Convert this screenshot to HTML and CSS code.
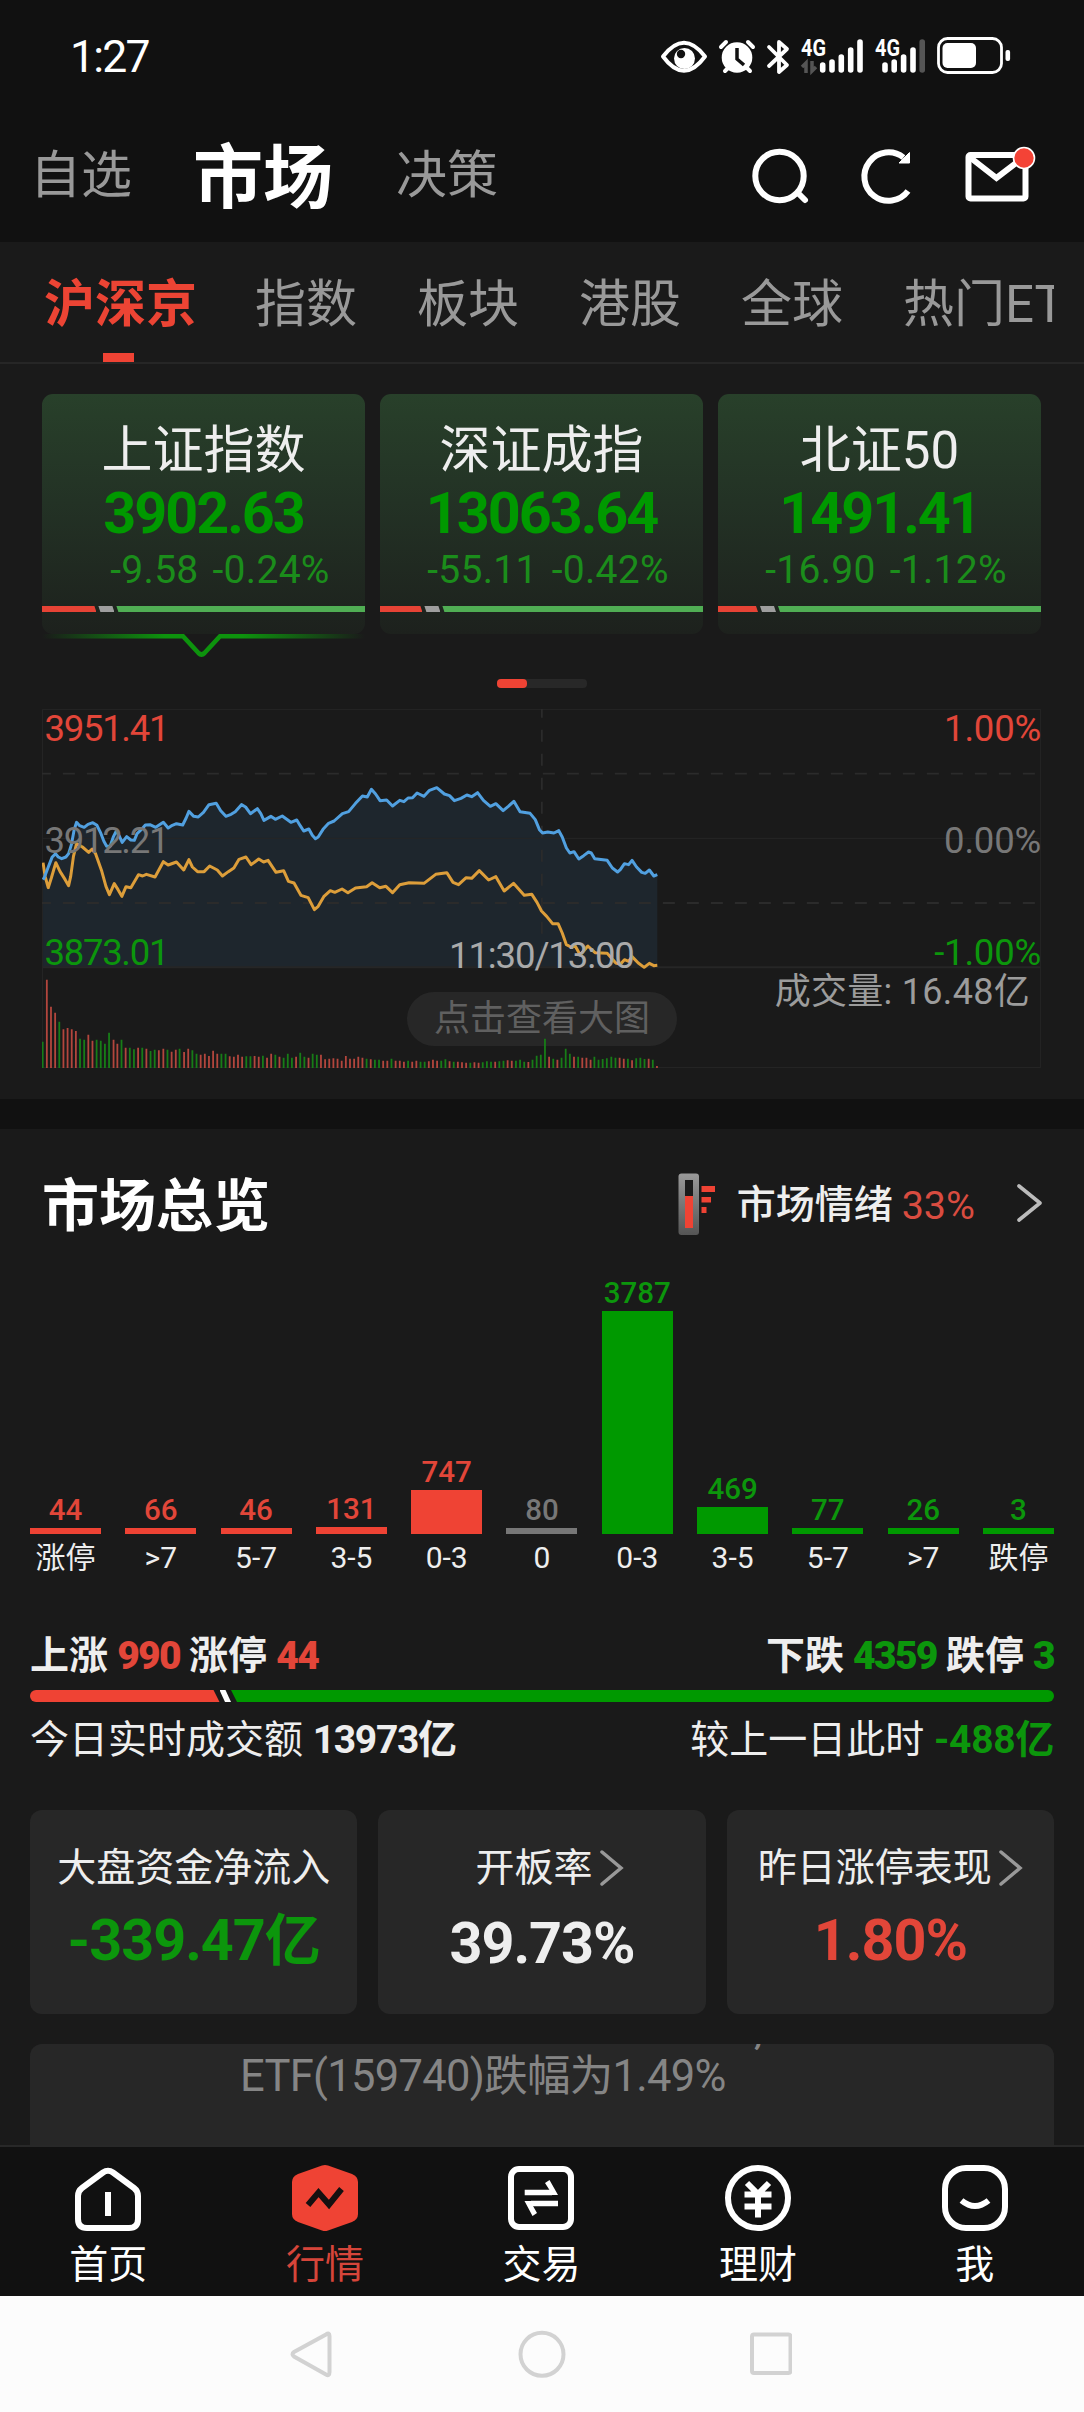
FILE: index.html
```html
<!DOCTYPE html>
<html lang="zh-CN">
<head>
<meta charset="utf-8">
<title>市场</title>
<link rel="stylesheet" href="styles.css">
</head>
<body>
<header class="top">
  <div class="status">
    <span class="clock">1:27</span>
    <svg class="status-icons" width="352" height="44" viewBox="660 34 352 44" fill="none" stroke="#fff">
      <path d="M663 56.500Q684 29 705 56.500Q684 85 663 56.500Z" stroke-width="4" stroke-linejoin="round"/>
      <circle cx="684.500" cy="58.500" r="10.500" fill="#fff" stroke="none"/>
      <circle cx="681" cy="54" r="4.200" fill="#111" stroke="none"/>
      <circle cx="737" cy="57.500" r="15.300" fill="#fff" stroke="none"/>
      <path d="M721 47l5-5M753 47l-5-5M725 71l4-4M750 71l-4-4" stroke-width="4" stroke-linecap="round"/>
      <path d="M737 48v11l7 6" stroke="#111" stroke-width="3.500"/>
      <path d="M769 47L787 65L779 72V42L787 49L769 66" stroke-width="3.800" stroke-linejoin="round" stroke-linecap="round"/>
      <text class="net" x="801" y="56" textLength="25" lengthAdjust="spacingAndGlyphs">4G</text>
      <path d="M806 73V63L802 67M812 61V71L816 67" stroke="#555" stroke-width="3.500"/>
      <path d="M822.700 65V70M832 62V70M841.300 57V70M850.700 50V70M860 42V70" stroke-width="5.600" stroke-linecap="round"/>
      <text class="net" x="875" y="56" textLength="25" lengthAdjust="spacingAndGlyphs">4G</text>
      <path d="M885 65V70M894.200 62V70M903.600 57V70M913 50V70" stroke-width="5.600" stroke-linecap="round"/>
      <path d="M922.200 42V70" stroke="#555" stroke-width="5.600" stroke-linecap="round"/>
      <rect x="938.500" y="38.500" width="63" height="34" rx="9" stroke-width="2.800"/>
      <rect x="942.500" y="43" width="33.500" height="25" rx="5" fill="#fff" stroke="none"/>
      <rect x="1005.500" y="50" width="4.600" height="11" rx="2" fill="#fff" stroke="none"/>
    </svg>
  </div>
  <nav class="main-tabs">
    <span>自选</span><span class="on">市场</span><span>决策</span>
    <svg class="actions" width="290" height="64" viewBox="750 144 290 64" fill="none" stroke="#fff" stroke-width="6">
      <circle cx="779.500" cy="176" r="24.200"/>
      <path d="M798 193l7 7" stroke-linecap="round"/>
      <path d="M908 191A24.200 24.200 0 1 1 903.500 157.500"/>
      <path d="M909.500 152.500V163H899Z" fill="#fff" stroke="#fff" stroke-width="1"/>
      <rect x="968.500" y="155" width="57" height="43.500" rx="2"/>
      <path d="M969.500 157L996.500 178L1024 157"/>
      <circle cx="1024" cy="158" r="10.500" fill="#f44336" stroke-width="1.600"/>
    </svg>
  </nav>
</header>

<section class="quotes">
  <nav class="sub-tabs">
    <div class="sub-track"><span class="on">沪深京</span><span>指数</span><span>板块</span><span>港股</span><span>全球</span><span>热门ETF</span></div>
  </nav>

  <div class="indexes">
    <article class="index active">
      <h3>上证指数</h3><b>3902.63</b>
      <p class="change first">-9.58 -0.24%</p>
      <div class="strip"><i class="up" style="width:54.4px"></i><i class="flat"></i><i class="down"></i></div>
      <svg class="marker" width="323" height="24" viewBox="0 0 323 24">
        <defs><linearGradient id="fade" gradientUnits="userSpaceOnUse" x1="0" x2="323" y1="0" y2="0"><stop offset="0" stop-color="#0d930d" stop-opacity="0"/><stop offset=".38" stop-color="#0d930d"/><stop offset=".62" stop-color="#0d930d"/><stop offset="1" stop-color="#0d930d" stop-opacity="0"/></linearGradient></defs>
        <path d="M0 2.300H141L156.500 19Q159.500 22 162.500 19L178 2.300H323" fill="none" stroke="url(#fade)" stroke-width="4.600"/>
      </svg>
    </article>
    <article class="index">
      <h3>深证成指</h3><b>13063.64</b>
      <p class="change">-55.11 -0.42%</p>
      <div class="strip"><i class="up" style="width:42.4px"></i><i class="flat"></i><i class="down"></i></div>
    </article>
    <article class="index">
      <h3>北证50</h3><b>1491.41</b>
      <p class="change">-16.90 -1.12%</p>
      <div class="strip"><i class="up" style="width:40px"></i><i class="flat"></i><i class="down"></i></div>
    </article>
  </div>
  <div class="pager"><i></i></div>

  <div class="chart">
    <span class="pill">点击查看大图</span>
    <svg class="plot" width="999" height="359" viewBox="123 58 2890 1077" preserveAspectRatio="none">
      <path class="area" d="M126 833V570L130 563 140 535 152 503 162 492 170 502 180 507 192 502 200 492 208 465 216 420 223 398 232 408 245 413 256 404 270 399 282 407 292 428 302 455 310 470 320 470 330 440 338 424 347 440 355 458 368 441 380 451 390 452 398 432 412 418 422 406 435 405 452 413 474 398 488 415 500 407 512 402 530 406 540 385 548 365 562 380 575 382 590 368 606 345 627 341 640 363 655 380 670 374 682 366 700 345 712 352 726 372 746 357 756 372 765 392 785 380 798 389 818 379 843 398 860 391 870 408 880 424 895 418 905 437 914 447 922 442 936 419 952 401 968 394 992 372 1010 366 1030 341 1050 319 1064 322 1076 299 1088 313 1101 333 1120 331 1137 349 1158 332 1170 336 1182 325 1195 324 1208 310 1228 320 1244 302 1265 294 1287 313 1302 318 1316 333 1335 326 1352 316 1366 321 1383 309 1400 332 1420 350 1436 342 1457 363 1472 350 1488 335 1506 366 1535 371 1550 390 1562 420 1571 430 1586 427 1604 430 1618 423 1628 442 1640 475 1650 490 1662 486 1676 508 1690 498 1704 487 1712 490 1722 507 1758 512 1773 535 1788 547 1796 540 1808 522 1820 525 1830 512 1843 532 1858 548 1868 551 1880 541 1893 559 1903 555V833Z"/>
      <path class="grid" d="M124 59H3012V1134H124ZM124 446H3012"/>
      <path class="grid mid" d="M124 833H3012"/>
      <path class="grid dash" d="M114 252H3012M114 640H3012M1569 48V833"/>
      <path class="line avg" d="M126 519L132 560 141 594 150 565 163 519 175 545 190 570 200 588 206 560 214 500 223 462 240 472 258 488 268 478 278 492 296 545 308 590 318 615 332 582 343 600 354 620 366 591 380 594 402 555 414 559 425 554 450 562 474 516 488 526 512 517 533 541 548 510 558 532 573 546 592 546 608 529 630 541 645 559 662 546 678 535 693 509 713 502 728 525 750 508 764 517 777 512 800 548 822 543 836 575 852 580 872 617 893 624 911 660 922 650 938 621 957 603 970 608 991 598 1008 609 1030 595 1062 591 1078 579 1100 594 1118 590 1137 609 1158 585 1185 579 1228 581 1262 554 1294 549 1312 578 1328 585 1350 564 1366 566 1388 543 1415 571 1436 561 1460 604 1487 581 1518 617 1540 614 1555 638 1568 664 1583 680 1600 702 1616 702 1628 730 1640 765 1653 772 1666 770 1680 796 1702 769 1723 789 1758 791 1783 820 1796 824 1808 810 1820 815 1830 801 1848 820 1865 833 1880 821 1893 828 1903 827"/>
      <path class="line price" d="M126 570L130 563 140 535 152 503 162 492 170 502 180 507 192 502 200 492 208 465 216 420 223 398 232 408 245 413 256 404 270 399 282 407 292 428 302 455 310 470 320 470 330 440 338 424 347 440 355 458 368 441 380 451 390 452 398 432 412 418 422 406 435 405 452 413 474 398 488 415 500 407 512 402 530 406 540 385 548 365 562 380 575 382 590 368 606 345 627 341 640 363 655 380 670 374 682 366 700 345 712 352 726 372 746 357 756 372 765 392 785 380 798 389 818 379 843 398 860 391 870 408 880 424 895 418 905 437 914 447 922 442 936 419 952 401 968 394 992 372 1010 366 1030 341 1050 319 1064 322 1076 299 1088 313 1101 333 1120 331 1137 349 1158 332 1170 336 1182 325 1195 324 1208 310 1228 320 1244 302 1265 294 1287 313 1302 318 1316 333 1335 326 1352 316 1366 321 1383 309 1400 332 1420 350 1436 342 1457 363 1472 350 1488 335 1506 366 1535 371 1550 390 1562 420 1571 430 1586 427 1604 430 1618 423 1628 442 1640 475 1650 490 1662 486 1676 508 1690 498 1704 487 1712 490 1722 507 1758 512 1773 535 1788 547 1796 540 1808 522 1820 525 1830 512 1843 532 1858 548 1868 551 1880 541 1893 559 1903 555"/>
      <path class="vol red" d="M137 1135V870M149 1135V951M161 1135V969M185 1135V1019M197 1135V1015M209 1135V1019M221 1135V1024M257 1135V1035M269 1135V1053M330 1135V1050M341 1135V1062M365 1135V1074M401 1135V1074M425 1135V1077M461 1135V1082M474 1135V1077M498 1135V1086M510 1135V1080M534 1135V1087M546 1135V1077M582 1135V1095M594 1135V1092M606 1135V1099M618 1135V1083M630 1135V1092M666 1135V1100M678 1135V1101M690 1135V1095M702 1135V1101M738 1135V1099M750 1135V1101M774 1135V1104M786 1135V1092M810 1135V1101M858 1135V1101M894 1135V1104M930 1135V1095M942 1135V1109M954 1135V1107M966 1135V1106M978 1135V1107M990 1135V1113M1002 1135V1099M1014 1135V1107M1026 1135V1107M1038 1135V1101M1050 1135V1104M1074 1135V1109M1110 1135V1113M1122 1135V1113M1146 1135V1113M1158 1135V1113M1170 1135V1116M1194 1135V1116M1206 1135V1113M1242 1135V1115M1254 1135V1110M1266 1135V1113M1302 1135V1115M1326 1135V1116M1338 1135V1118M1350 1135V1119M1374 1135V1118M1386 1135V1119M1434 1135V1116M1470 1135V1112M1482 1135V1113M1530 1135V1117M1590 1135V1101M1614 1135V1110M1662 1135V1101M1686 1135V1104M1698 1135V1104M1710 1135V1110M1794 1135V1104M1806 1135V1107M1830 1135V1112M1878 1135V1107M1902 1135V1129"/>
      <path class="vol green" d="M125 1135V1056M173 1135V996M233 1135V1047M245 1135V1050M281 1135V1050M293 1135V1053M305 1135V1062M317 1135V1029M353 1135V1050M377 1135V1074M389 1135V1079M413 1135V1074M437 1135V1084M449 1135V1080M486 1135V1080M521 1135V1077M558 1135V1082M570 1135V1092M642 1135V1092M654 1135V1092M714 1135V1100M726 1135V1100M762 1135V1098M798 1135V1095M822 1135V1104M834 1135V1092M846 1135V1104M870 1135V1089M882 1135V1101M906 1135V1092M918 1135V1095M1062 1135V1107M1086 1135V1110M1098 1135V1110M1134 1135V1107M1182 1135V1113M1218 1135V1116M1230 1135V1116M1278 1135V1113M1290 1135V1109M1314 1135V1116M1362 1135V1119M1398 1135V1118M1410 1135V1115M1422 1135V1116M1446 1135V1115M1458 1135V1113M1494 1135V1113M1506 1135V1110M1518 1135V1116M1542 1135V1110M1554 1135V1098M1566 1135V1095M1578 1135V1047M1602 1135V1107M1626 1135V1104M1638 1135V1077M1650 1135V1092M1674 1135V1101M1721 1135V1101M1733 1135V1110M1745 1135V1108M1757 1135V1106M1770 1135V1101M1782 1135V1104M1818 1135V1107M1842 1135V1106M1854 1135V1104M1866 1135V1108M1890 1135V1110"/>
    </svg>
    <div class="axis left"><span class="r">3951.41</span><span class="n">3912.21</span><span class="g">3873.01</span></div>
    <div class="axis right"><span class="r">1.00%</span><span class="n">0.00%</span><span class="g">-1.00%</span></div>
    <span class="noon">11:30/13:00</span>
    <span class="volume">成交量: 16.48亿</span>
  </div>
</section>

<section class="overview">
  <div class="overview-head">
    <h2>市场总览</h2>
    <svg width="38" height="64" viewBox="678 1173 38 64">
      <defs><linearGradient id="tube" x1="0" x2="0" y1="0" y2="1"><stop offset="0" stop-color="#999"/><stop offset="1" stop-color="#555"/></linearGradient></defs>
      <rect x="678.500" y="1173.500" width="20.500" height="61.500" rx="3" fill="url(#tube)"/>
      <rect x="685" y="1180" width="8" height="48" fill="#1a1a1a"/>
      <path fill="#ef4334" d="M685 1196h8v32h-8zM701.500 1186h13.500v6h-13.500zM701.500 1197h9.500v5.500h-9.500zM701.500 1207h5v6h-5z"/>
    </svg>
    <span class="mood">市场情绪</span><span class="mood-value">33%</span>
    <svg class="mood-arrow" width="26" height="40" viewBox="0 0 26 40"><path d="M2 3L23 20 2 37" fill="none" stroke="#bbb" stroke-width="3.600" stroke-linecap="round" stroke-linejoin="round"/></svg>
  </div>

  <div class="spread">
    <div class="col r"><span>44</span><i style="height:6px"></i><em>涨停</em></div>
    <div class="col r"><span>66</span><i style="height:6px"></i><em>&gt;7</em></div>
    <div class="col r"><span>46</span><i style="height:6px"></i><em>5-7</em></div>
    <div class="col r"><span>131</span><i style="height:7px"></i><em>3-5</em></div>
    <div class="col r"><span>747</span><i style="height:44px"></i><em>0-3</em></div>
    <div class="col n"><span>80</span><i style="height:6px"></i><em>0</em></div>
    <div class="col g"><span>3787</span><i style="height:223px"></i><em>0-3</em></div>
    <div class="col g"><span>469</span><i style="height:27px"></i><em>3-5</em></div>
    <div class="col g"><span>77</span><i style="height:6px"></i><em>5-7</em></div>
    <div class="col g"><span>26</span><i style="height:6px"></i><em>&gt;7</em></div>
    <div class="col g"><span>3</span><i style="height:6px"></i><em>跌停</em></div>
  </div>

  <div class="totals strong">
    <p>上涨 <b class="r">990</b> 涨停 <b class="r">44</b></p>
    <p>下跌 <b class="g">4359</b> 跌停 <b class="g">3</b></p>
  </div>
  <div class="ratio"><i class="up" style="width:189.5px"></i><i class="flat"></i><i class="down"></i></div>
  <div class="totals">
    <p>今日实时成交额 <b>13973亿</b></p>
    <p>较上一日此时 <b class="g diff">-488亿</b></p>
  </div>

  <div class="facts">
    <div class="fact"><p>大盘资金净流入</p><b class="g">-339.47<small>亿</small></b></div>
    <div class="fact low"><p>开板率<svg width="24" height="36" viewBox="0 0 24 36"><path d="M2 2L21 18 2 34"/></svg></p><b>39.73%</b></div>
    <div class="fact"><p>昨日涨停表现<svg width="24" height="36" viewBox="0 0 24 36"><path d="M2 2L21 18 2 34"/></svg></p><b class="r">1.80%</b></div>
  </div>
  <div class="news"><span class="news-prev">,</span><span class="news-line">ETF(159740)跌幅为1.49%</span></div>
</section>

<nav class="tabbar">
  <a><svg width="68" height="68" viewBox="74 2164 68 68"><path d="M103 2172.500Q108 2169 113 2172.500L134 2188Q138 2191 138 2196V2219Q138 2228 129 2228H87Q78 2228 78 2219V2196Q78 2191 82 2188ZM108 2192V2216"/></svg>首页</a>
  <a class="on"><svg width="68" height="68" viewBox="290 2164 68 68"><path class="solid" d="M321 2165.500Q324 2164.500 327 2165.500L351 2174Q357 2176.500 357 2182V2214Q357 2219.500 351 2222L327 2230.500Q324 2231.500 321 2230.500L297 2222Q291 2219.500 291 2214V2182Q291 2176.500 297 2174Z"/><path class="zig" d="M307 2205L317.500 2192.500 328 2204.500 340.500 2189"/></svg>行情</a>
  <a><svg width="68" height="68" viewBox="507 2164 68 68"><rect x="511" y="2169" width="60" height="58" rx="8"/><path class="thin" d="M524.700 2192.500H552M558 2203.500H531"/><path class="solid" d="M545 2183l4.500-3L558 2195H547L549.500 2190ZM537 2213l-4.500 3L524.500 2201H535.500L533 2206Z"/></svg>交易</a>
  <a><svg width="68" height="68" viewBox="724 2164 68 68"><circle cx="758" cy="2198" r="30"/><path d="M747 2183L758 2194 769 2183M744.500 2194.500H771.500M744.500 2206.500H771.500M758 2194V2217.500"/></svg>理财</a>
  <a><svg width="68" height="68" viewBox="941 2164 68 68"><rect x="945" y="2168" width="60" height="60" rx="21"/><path d="M961.500 2200.500Q975 2211.500 988.500 2200.500"/></svg>我</a>
</nav>

<footer class="system">
  <svg width="502" height="50" viewBox="290 2329 502 50" fill="none" stroke="#d2d2d2" stroke-width="4">
    <path d="M326 2334.500Q329.500 2332 329.500 2336V2372Q329.500 2376.500 326 2374.500L294 2356.500Q291 2354 294 2352Z"/>
    <circle cx="542" cy="2354.300" r="21.500"/>
    <rect x="752" y="2334.500" width="38.500" height="38.500" rx="2"/>
  </svg>
</footer>
</body>
</html>
```
FILE: styles.css
```css
* { box-sizing: border-box; }
body, h2, h3, p { margin: 0; }
i, em { font-style: normal; }

body {
  display: flex;
  flex-direction: column;
  width: 1084px;
  height: 2412px;
  overflow: hidden;
  background: #111;
  color: #eee;
  font-family: Roboto, "Noto Sans CJK SC", sans-serif;
}
svg { display: block; flex: none; }

.r { color: #e24639; }
.g { color: #0c960c; }
.n { color: #777; }

/* header */
.top { height: 242px; flex: none; }
.status {
  display: flex;
  justify-content: space-between;
  height: 110px;
  padding: 34px 72px 0 70px;
}
.clock { color: #fff; font-size: 44.500px; line-height: 47px; letter-spacing: -1.800px; }
.net { font: 700 24px Roboto, sans-serif; fill: #fff; stroke: none; }
.main-tabs {
  display: flex;
  align-items: center;
  gap: 62px;
  height: 132px;
  padding: 0 44px 0 30px;
  color: #999;
  font-size: 51px;
  line-height: 70px;
  white-space: nowrap;
}
.main-tabs .on { margin: 0 1px 0 -1px; padding-top: 5px; color: #fff; font-size: 70px; font-weight: 700; }
.actions { margin-left: auto; }

/* market tabs */
.quotes { height: 857px; flex: none; background: #1a1a1a; }
.sub-tabs { height: 122px; padding: 0 30px 0 44px; border-bottom: 2px solid #262626; }
.sub-track {
  display: flex;
  gap: 60px;
  height: 120px;
  overflow: hidden;
  color: #999;
  font-size: 51px;
  line-height: 125px;
  white-space: nowrap;
}
.sub-track .on { position: relative; margin-right: -2px; color: #ec4434; font-weight: 700; }
.sub-track .on::after {
  content: "";
  position: absolute;
  left: 59px;
  bottom: 0;
  width: 31px;
  height: 9px;
  background: #ef4334;
}

/* index cards */
.indexes { display: flex; gap: 15px; padding: 30px 43px 0 42px; }
.index {
  position: relative;
  flex: 1;
  height: 240px;
  padding-top: 27px;
  border-radius: 11px;
  background: linear-gradient(#28402a, #233225 45%, #1d211d);
  text-align: center;
}
.index h3 { font-size: 51px; font-weight: 400; line-height: 60px; }
.index b { display: block; color: #090; font-size: 57.5px; line-height: 65px; letter-spacing: -2px; }
.change { padding-left: 13px; color: #1b8d1b; font-size: 39px; font-weight: 400; line-height: 48px; letter-spacing: .3px; word-spacing: 4px; white-space: nowrap; }
.change.first { padding-left: 33px; }
.strip { display: flex; gap: 2px; height: 6px; margin-top: 12px; }
.strip .up { background: #e64335; clip-path: polygon(0 0, calc(100% - 2px) 0, 100% 100%, 0 100%); }
.strip .flat { width: 16px; background: #9e9e9e; clip-path: polygon(0 0, calc(100% - 2px) 0, 100% 100%, 2px 100%); }
.strip .down { flex: 1; background: #50ae54; clip-path: polygon(0 0, 100% 0, 100% 100%, 2px 100%); }
.marker { position: absolute; left: 0; top: 100%; }

.pager { width: 90px; height: 9px; margin: 45px auto 0; border-radius: 4px; background: #282828; }
.pager i { display: block; width: 30px; height: 9px; border-radius: 4px; background: #ef4334; }

/* intraday chart */
.chart { position: relative; width: 999px; height: 359px; margin: 21px 0 0 42px; }
.plot { position: absolute; inset: 0; }
.plot path { fill: none; vector-effect: non-scaling-stroke; }
.plot .area { fill: rgba(66, 150, 215, .1); }
.plot .grid { stroke: #262626; stroke-width: 1; }
.plot .mid { stroke-width: 2; }
.plot .dash { stroke: #2b2b2b; stroke-width: 1.800; stroke-dasharray: 12 12; }
.line { stroke-width: 3; stroke-linejoin: round; }
.avg { stroke: #dd9e3a; }
.price { stroke: #51a0e0; }
.vol { stroke-width: 1.800; }
.vol.red { stroke: #b3463d; }
.vol.green { stroke: #177d17; }
.axis {
  position: absolute;
  top: 1px;
  display: flex;
  flex-direction: column;
  justify-content: space-between;
  height: 262px;
  font-size: 36.5px;
  line-height: 38px;
}
.axis.left { left: 2.500px; letter-spacing: -1.300px; }
.axis.right { right: 0; letter-spacing: -.200px; text-align: right; }
.noon { position: absolute; left: 407px; top: 227px; color: #aaa; font-size: 36.5px; line-height: 40px; letter-spacing: -1.100px; }
.volume { position: absolute; right: 11px; top: 263px; color: #9c9c9c; font-size: 36px; line-height: 40px; letter-spacing: .3px; }
.pill {
  position: absolute;
  left: 365px;
  top: 282.500px;
  width: 270px;
  height: 54px;
  border-radius: 27px;
  background: #272727;
  color: #606060;
  font-size: 36px;
  line-height: 54px;
  text-align: center;
}

/* overview */
.overview { height: 1018px; flex: none; margin-top: 30px; padding: 0 30px; background: #1a1a1a; border-bottom: 2px solid #282828; }
.overview-head { display: flex; align-items: center; height: 143px; padding: 8px 11px 0 12px; }
.overview-head h2 { margin-right: auto; padding-top: 4px; color: #fff; font-size: 57px; line-height: 80px; }
.mood { margin: 1px 0 0 21px; font-size: 39px; font-weight: 500; line-height: 50px; }
.mood-value { margin: 3px 0 0 9px; color: #d94c40; font-size: 39.500px; line-height: 50px; }
.mood-arrow { margin: -4px 0 0 42px; }

.spread { display: grid; grid-template-columns: repeat(11, 71px); justify-content: space-between; height: 309px; align-items: end; }
.col { display: flex; flex-direction: column; text-align: center; white-space: nowrap; }
.col span { height: 39px; font-size: 29.500px; font-weight: 500; line-height: 42px; }
.col i { background: currentColor; }
.col.r i { background: #ef4334; }
.col.g i { background: #090; }
.col em { height: 47px; color: #eee; font-size: 30px; line-height: 47px; }

.totals { display: flex; justify-content: space-between; height: 60px; font-size: 39px; line-height: 62px; white-space: nowrap; }
.totals.strong { margin-top: 44px; word-spacing: -.500px; font-weight: 700; }
.totals b { letter-spacing: -1.300px; }
.totals .diff { letter-spacing: -.300px; }
.totals.strong b { letter-spacing: -1.700px; }
.ratio { display: flex; height: 12px; margin: 5px 0 7px; border-radius: 6px; overflow: hidden; }
.ratio .up { background: #ef4334; clip-path: polygon(0 0, calc(100% - 6px) 0, 100% 100%, 0 100%); }
.ratio .flat { width: 11.500px; background: #fff; clip-path: polygon(0 0, 6px 0, 100% 100%, 5.500px 100%); }
.ratio .down { flex: 1; background: #090; clip-path: polygon(0 0, 100% 0, 100% 100%, 6px 100%); }

.facts { display: grid; grid-template-columns: repeat(3, 1fr); gap: 21px; margin-top: 41px; }
.fact { height: 204px; padding-top: 33px; border-radius: 12px; background: #272727; text-align: center; }
.fact p { display: flex; align-items: center; justify-content: center; gap: 7px; font-size: 39px; line-height: 50px; }
.fact.low p { padding-left: 15px; }
.fact path { fill: none; stroke: #999; stroke-width: 3.500; stroke-linecap: round; }
.fact b { display: block; margin-top: 13px; font-size: 57.500px; line-height: 70px; letter-spacing: -1px; }
.fact.low b { margin-top: 16px; }
.fact small { font-size: 56px; }
.news { position: relative; height: 101px; margin-top: 30px; padding: 9px 0 0 210px; overflow: hidden; border-radius: 12px 12px 0 0; background: #272727; color: #858585; font-size: 43.500px; line-height: 48px; letter-spacing: -.700px; white-space: nowrap; }
.news-prev { position: absolute; left: 724px; top: -38px; }

/* bottom bars */
.tabbar { display: flex; height: 149px; flex: none; padding: 17px 1px 0 0; color: #fff; font-size: 39px; line-height: 66px; }
.tabbar a { display: flex; flex: 1; flex-direction: column; align-items: center; }
.tabbar path, .tabbar rect, .tabbar circle { fill: none; stroke: #fff; stroke-width: 6; }
.tabbar .thin { stroke-width: 5.500; }
.tabbar .solid { fill: #fff; stroke: none; }
.tabbar .on { color: #d6453a; }
.tabbar .on .solid { fill: #ef4334; }
.tabbar .on .zig { stroke: #151010; }
.system { display: flex; height: 116px; flex: none; padding: 33px 0 0 290px; background: #fcfcfc; }
```
